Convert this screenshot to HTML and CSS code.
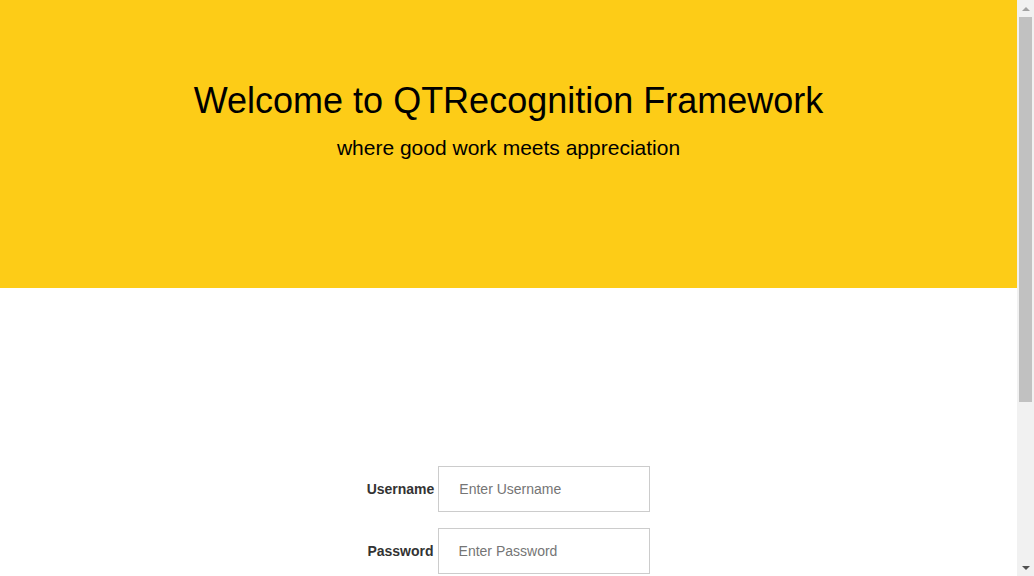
FILE: index.html
```html
<!DOCTYPE html>
<html>
<head>
<meta charset="utf-8">
<title>QTRecognition</title>
<link rel="stylesheet" href="styles.css">
</head>
<body>
<div class="page">
  <header class="hero">
    <h1 class="hero-title">Welcome to QTRecognition Framework</h1>
    <p class="hero-sub">where good work meets appreciation</p>
  </header>
  <main class="login">
    <form class="login-form">
      <div class="field">
        <label class="field-label" for="u">Username</label>
        <input class="field-input" id="u" type="text" placeholder="Enter Username">
      </div>
      <div class="field">
        <label class="field-label" for="p">Password</label>
        <input class="field-input" id="p" type="password" placeholder="Enter Password">
      </div>
      <div class="field">
        <button class="login-btn" type="button">Login</button>
      </div>
    </form>
  </main>
</div>
<div class="scrollbar" aria-hidden="true">
  <div class="sb-btn"><span class="sb-arrow sb-up"></span></div>
  <div class="sb-track"><div class="sb-thumb"></div></div>
  <div class="sb-btn"><span class="sb-arrow sb-down"></span></div>
</div>
</body>
</html>
```
FILE: styles.css
```css
html, body {
  margin: 0;
  padding: 0;
}
body {
  font-family: "Liberation Sans", Arial, sans-serif;
  background: #fff;
  color: #000;
}
.page {
  margin-right: 17px;
}
.hero {
  background: #fdcc17;
  height: 288px;
  box-sizing: border-box;
  padding-top: 80px;
  text-align: center;
}
.hero-title {
  margin: 0;
  font-size: 36px;
  font-weight: normal;
  line-height: 41px;
}
.hero-sub {
  margin: 15px 0 0;
  font-size: 21px;
  line-height: 24px;
}
.login {
  padding-top: 178px;
  padding-bottom: 160px;
}
.login-form {
  display: flex;
  flex-direction: column;
  gap: 16px;
}
.field {
  display: flex;
  justify-content: center;
  align-items: center;
  gap: 4px;
}
.field-label {
  font-size: 14px;
  font-weight: bold;
  color: #333;
}
.field-input {
  box-sizing: border-box;
  width: 212px;
  height: 46px;
  border: 1px solid #ccc;
  padding: 0 20px;
  font-family: "Liberation Sans", Arial, sans-serif;
  font-size: 14px;
  color: #333;
  outline: none;
}
.field-input::placeholder {
  color: #757575;
}
.login-btn {
  width: 212px;
  height: 46px;
  border: none;
  background: #fdcc17;
  font-family: "Liberation Sans", Arial, sans-serif;
  font-size: 16px;
}
.scrollbar {
  position: fixed;
  top: 0;
  right: 0;
  bottom: 0;
  width: 17px;
  background: #f1f1f1;
  display: flex;
  flex-direction: column;
}
.sb-btn {
  height: 17px;
  display: flex;
  align-items: center;
  justify-content: center;
}
.sb-track {
  flex: 1;
  padding: 0 2px;
}
.sb-thumb {
  height: 385px;
  background: #c1c1c1;
}
.sb-arrow {
  width: 0;
  height: 0;
  border-left: 4px solid transparent;
  border-right: 4px solid transparent;
}
.sb-up {
  border-bottom: 4px solid #a3a3a3;
}
.sb-down {
  border-top: 4px solid #505050;
}
```
